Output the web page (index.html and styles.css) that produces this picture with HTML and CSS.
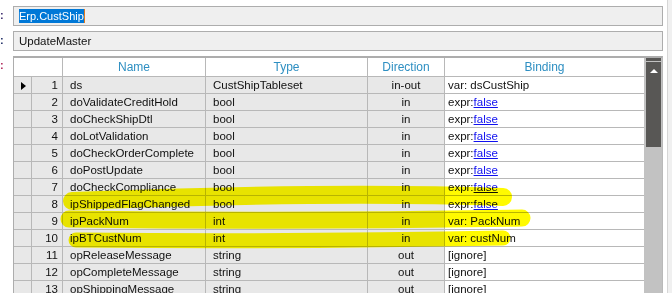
FILE: index.html
```html
<!DOCTYPE html>
<html lang="en">
<head>
  <meta charset="UTF-8" />
  <title>Method Parameters</title>
  <link rel="stylesheet" href="styles.css">
</head>
<body>
  <div class="main">
    <div class="field">
      <span class="lbl lbl-1">:</span>
      <div class="box"><span class="sel">Erp.CustShip</span><span class="caret"></span></div>
    </div>
    <div class="field">
      <span class="lbl lbl-2">:</span>
      <div class="box">UpdateMaster</div>
    </div>
    <div class="field field-grid">
      <span class="lbl lbl-3">:</span>
      <div class="grid">
        <table class="params">
          <colgroup>
            <col class="c-ind"><col class="c-num"><col class="c-name"><col class="c-type"><col class="c-dir"><col class="c-bind">
          </colgroup>
          <thead>
            <tr>
              <th colspan="2"></th>
              <th>Name</th>
              <th>Type</th>
              <th>Direction</th>
              <th>Binding</th>
            </tr>
          </thead>
          <tbody>
            <tr><td class="ind"><span class="arrow"></span></td><td class="num">1</td><td>ds</td><td>CustShipTableset</td><td class="dir">in-out</td><td class="bind">var: dsCustShip</td></tr>
            <tr><td class="ind"></td><td class="num">2</td><td>doValidateCreditHold</td><td>bool</td><td class="dir">in</td><td class="bind">expr:<a href="#">false</a></td></tr>
            <tr><td class="ind"></td><td class="num">3</td><td>doCheckShipDtl</td><td>bool</td><td class="dir">in</td><td class="bind">expr:<a href="#">false</a></td></tr>
            <tr><td class="ind"></td><td class="num">4</td><td>doLotValidation</td><td>bool</td><td class="dir">in</td><td class="bind">expr:<a href="#">false</a></td></tr>
            <tr><td class="ind"></td><td class="num">5</td><td>doCheckOrderComplete</td><td>bool</td><td class="dir">in</td><td class="bind">expr:<a href="#">false</a></td></tr>
            <tr><td class="ind"></td><td class="num">6</td><td>doPostUpdate</td><td>bool</td><td class="dir">in</td><td class="bind">expr:<a href="#">false</a></td></tr>
            <tr><td class="ind"></td><td class="num">7</td><td>doCheckCompliance</td><td>bool</td><td class="dir">in</td><td class="bind">expr:<a href="#">false</a></td></tr>
            <tr><td class="ind"></td><td class="num">8</td><td>ipShippedFlagChanged</td><td>bool</td><td class="dir">in</td><td class="bind">expr:<a href="#">false</a></td></tr>
            <tr><td class="ind"></td><td class="num">9</td><td>ipPackNum</td><td>int</td><td class="dir">in</td><td class="bind">var: PackNum</td></tr>
            <tr><td class="ind"></td><td class="num">10</td><td>ipBTCustNum</td><td>int</td><td class="dir">in</td><td class="bind">var: custNum</td></tr>
            <tr><td class="ind"></td><td class="num">11</td><td>opReleaseMessage</td><td>string</td><td class="dir">out</td><td class="bind">[ignore]</td></tr>
            <tr><td class="ind"></td><td class="num">12</td><td>opCompleteMessage</td><td>string</td><td class="dir">out</td><td class="bind">[ignore]</td></tr>
            <tr><td class="ind"></td><td class="num">13</td><td>opShippingMessage</td><td>string</td><td class="dir">out</td><td class="bind">[ignore]</td></tr>
          </tbody>
        </table>
        <div class="vscroll">
          <div class="sb-cap"></div>
          <div class="sb-thumb"><span class="sb-up"></span></div>
        </div>
      </div>
    </div>
  </div>
  <div class="edge"></div>

  <!-- marker strokes drawn over the grid -->
  <svg class="marker" width="672" height="293" viewBox="0 0 672 293">
    <path d="M72,201 Q330,191 503,197" stroke-width="18" />
    <path d="M69,219 Q300,222 522,218" stroke-width="17" />
    <path d="M76,240 Q300,242 503,238" stroke-width="15" />
  </svg>
</body>
</html>
```

FILE: styles.css
```css
* {
  margin: 0;
  padding: 0;
  box-sizing: border-box;
}

body {
  position: relative;
  width: 672px;
  height: 293px;
  overflow: hidden;
  display: flex;
  background: #fff;
  font-family: 'Liberation Sans', Arial, sans-serif;
  color: #111;
}

.main {
  flex: 0 0 667px;
  padding-top: 6px;
}

.edge {
  flex: 1;
  background: #f0f0f0;
  border-left: 1px solid #d6d6d6;
}

.field {
  display: flex;
  height: 20px;
  margin-bottom: 5px;
}

.field-grid {
  height: auto;
  margin-bottom: 0;
}

.lbl {
  width: 13px;
  font-size: 11px;
  line-height: 18px;
  font-weight: bold;
}

.lbl-1 { color: #3b2a6e; }
.lbl-2 { color: #1f2d66; }
.lbl-3 { color: #b0285a; }

.box {
  width: 650px;
  height: 20px;
  border: 1px solid #adadad;
  background: #efefef;
  padding-left: 5px;
  font-size: 11.5px;
  line-height: 18px;
  display: flex;
  align-items: center;
}

.sel {
  background: #0078d7;
  color: #fff;
  line-height: 14px;
  font-size: 11px;
}

.caret {
  width: 1px;
  height: 14px;
  background: #e07a20;
}

/* parameter grid */
.grid {
  display: flex;
  width: 650px;
  border-top: 2px solid #adadad;
  border-left: 1px solid #adadad;
  border-right: 1px solid #b9b9b9;
}

.params {
  width: 630px;
  table-layout: fixed;
  border-spacing: 0;
  font-size: 11.5px;
}

.c-ind { width: 18px; }
.c-num { width: 31px; }
.c-name { width: 143px; }
.c-type { width: 162px; }
.c-dir { width: 77px; }
.c-bind { width: 199px; }

.params th {
  height: 19px;
  background: #fff;
  color: #2e8fc2;
  font-weight: normal;
  font-size: 12px;
  border-right: 1px solid #b8b8b8;
  border-bottom: 1px solid #b8b8b8;
  line-height: 18px;
}

.params td {
  height: 17px;
  line-height: 16px;
  background: #e8e8e8;
  border-right: 1px solid #b8b8b8;
  border-bottom: 1px solid #b8b8b8;
  padding-left: 7px;
  white-space: nowrap;
  overflow: hidden;
}

.params th:last-child,
.params td:last-child {
  border-right: none;
}

.params td.ind {
  padding: 0 0 0 7px;
}

.params td.num {
  text-align: right;
  padding: 0 4px 0 0;
}

.params td.dir {
  text-align: center;
  padding: 0;
}

.params td.bind {
  background: #fff;
  padding-left: 3px;
}

.bind a {
  color: #1010f0;
  text-decoration: underline;
}

.arrow {
  display: inline-block;
  width: 0;
  height: 0;
  border-left: 5px solid #000;
  border-top: 4px solid transparent;
  border-bottom: 4px solid transparent;
  vertical-align: -1px;
}

.vscroll {
  width: 18px;
  background: #c2c2c2;
  display: flex;
  flex-direction: column;
  align-items: flex-start;
}

.sb-cap {
  width: 15px;
  height: 3px;
  margin: 0 0 1px 2px;
  background: #585755;
}

.sb-thumb {
  width: 15px;
  height: 85px;
  margin-left: 2px;
  background: #585755;
  display: flex;
  justify-content: center;
  padding-top: 7px;
}

.sb-up {
  width: 0;
  height: 0;
  border-left: 4px solid transparent;
  border-right: 4px solid transparent;
  border-bottom: 4px solid #fff;
}

.marker {
  position: absolute;
  left: 0;
  top: 0;
  pointer-events: none;
  mix-blend-mode: multiply;
}

.marker path {
  fill: none;
  stroke: #fffa00;
  stroke-linecap: round;
}
```
